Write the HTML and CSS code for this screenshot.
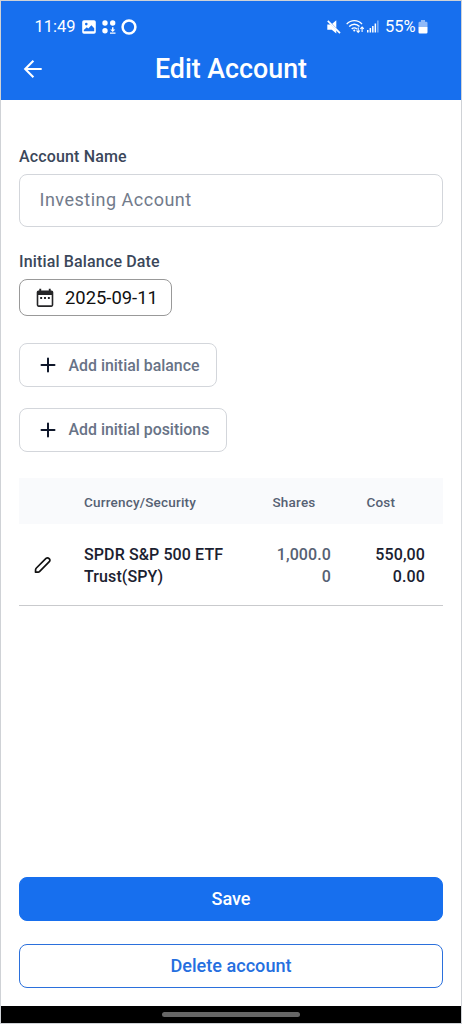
FILE: index.html
```html
<!DOCTYPE html>
<html lang="en">
<head>
<meta charset="utf-8">
<title>Edit Account</title>
<link rel="stylesheet" href="styles.css">
</head>
<body>
<div class="phone">
  <header class="header">
    <div class="status">
      <span class="status-time">11:49</span>
      <svg class="ic-photo" width="14" height="14" viewBox="0 0 14 14"><path fill="#fff" fill-rule="evenodd" d="M2 .3h10a1.8 1.8 0 0 1 1.8 1.8v9.8a1.8 1.8 0 0 1-1.8 1.8H2A1.8 1.8 0 0 1 .2 11.900V2.100A1.800 1.800 0 0 1 2 .3zM1.800 11.200h10.400V8.200L9.400 5.300 6.300 8.600 4.800 7.300 1.800 10zM4.300 2.800a1.300 1.300 0 1 0 0 2.600 1.300 1.300 0 0 0 0-2.600z"/></svg>
      <svg class="ic-dots" width="14" height="14" viewBox="0 0 14 14" fill="#fff"><circle cx="3" cy="3" r="2.700"/><circle cx="10.700" cy="3" r="2.700"/><circle cx="3" cy="10.800" r="2.700"/><path d="M10 7.200h1.500v2.300h1.800l-2.550 2.600-2.550-2.600H10zM8 12.500h5.500v1.300H8z"/></svg>
      <svg class="ic-ring" width="16" height="16" viewBox="0 0 16 16"><circle cx="8" cy="8" r="6.400" fill="none" stroke="#fff" stroke-width="2.500"/></svg>
      <span class="spacer"></span>
      <svg class="ic-mute" width="14" height="14" viewBox="0 0 14 14"><path fill="#fff" d="M.3 4.400h3.200l5.800 5.900v3.300L4.800 9.700H.3zM5.200 3.700 9.300.2v7.700z"/><path stroke="#fff" stroke-width="1.700" d="m.8.900 12.200 12.300"/></svg>
      <svg class="ic-wifi" width="19" height="15" viewBox="0 0 19 15" fill="none" stroke="#fff"><path stroke-width="1.400" d="M.7 5.100C5 .4 11.800.4 16 5.100M3.200 7.600c3-3.100 7.300-3.100 10.300 0M5.700 10.100c1.500-1.600 3.800-1.600 5.200 0"/><circle cx="8.300" cy="11.500" r="1.100" fill="#fff" stroke="none"/><path stroke-width="1.100" d="M12.200 8.500v4.800m-1.700-1.800 1.700 1.900 1.700-1.900M16.100 12.900V8m-1.700 1.900L16.100 8l1.700 1.900"/></svg>
      <svg class="ic-signal" width="12" height="13" viewBox="0 0 12 13" fill="#fff"><path d="M0 10h1.500v2.500H0zM2.600 8h1.500v4.500H2.600zM5.100 6h1.500v6.500H5.100zM7.600 3.600h1.500v8.900H7.600z"/><path opacity=".45" d="M10.100.5h1.500v12h-1.500z"/></svg>
      <span class="status-pct">55%</span>
      <svg class="ic-battery" width="10" height="14" viewBox="0 0 10 14"><path fill="#8fb9f8" d="M3 0h4v1.700h1.200A1.300 1.300 0 0 1 9.500 3v4h-9V3a1.300 1.300 0 0 1 1.300-1.300H3z"/><path fill="#fff" d="M.5 6.900h9v5.300a1.300 1.300 0 0 1-1.300 1.300H1.800a1.300 1.300 0 0 1-1.300-1.300z"/></svg>
    </div>
    <div class="appbar">
      <svg class="ic-back" width="20" height="20" viewBox="0 0 20 20" fill="none" stroke="#fff" stroke-width="2.100"><path d="M18.700 10H2M10.400 1.800 2.200 10l8.200 8.200"/></svg>
      <h1 class="title">Edit Account</h1>
    </div>
  </header>
  <main class="content">
    <label class="label">Account Name</label>
    <div class="field">Investing Account</div>
    <label class="label label-date">Initial Balance Date</label>
    <button class="date-btn">
      <svg width="18" height="20" viewBox="0 0 18 20"><path fill="#252527" fill-rule="evenodd" d="M3.300.8h1.900v1.700h7.600V.8h1.900v1.700h.8a1.800 1.800 0 0 1 1.800 1.800v12.800a1.800 1.800 0 0 1-1.800 1.800h-13a1.800 1.800 0 0 1-1.800-1.800V4.300a1.800 1.800 0 0 1 1.800-1.800h.8zM2.300 7.100v10.200h13.400V7.100z"/><path fill="#252527" d="M4.200 9.100h1.900V11H4.200zM8.050 9.100h1.900V11h-1.900zM11.900 9.100h1.900V11h-1.900z"/></svg>
      <span class="date-text">2025-09-11</span>
    </button>
    <button class="add-btn add-balance"><svg width="16" height="16" viewBox="0 0 16 16"><path fill="none" stroke="#0f172a" stroke-width="2" stroke-linecap="round" d="M8 1.500v13M1.500 8h13"/></svg><span class="add-text">Add initial balance</span></button>
    <button class="add-btn add-positions"><svg width="16" height="16" viewBox="0 0 16 16"><path fill="none" stroke="#0f172a" stroke-width="2" stroke-linecap="round" d="M8 1.500v13M1.500 8h13"/></svg><span class="add-text">Add initial positions</span></button>
    <div class="table">
      <div class="row head">
        <span></span><span class="th-name">Currency/Security</span><span class="th-shares">Shares</span><span class="th-cost">Cost</span>
      </div>
      <div class="row item">
        <svg class="ic-edit" width="18" height="18" viewBox="0 0 18 18"><path fill="none" stroke="#111" stroke-width="1.700" stroke-linejoin="round" d="M1.500 16.200l.1-2.500q.1-1 .8-1.700L12 2.400a2.350 2.350 0 0 1 3.300 3.300L5.700 15.300q-.7.700-1.700.8z"/></svg>
        <span class="name">SPDR S&amp;P 500 ETF<br>Trust(SPY)</span>
        <span class="shares">1,000.0<br>0</span>
        <span class="cost">550,00<br>0.00</span>
      </div>
    </div>
    <div class="actions">
      <button class="btn save"><span class="save-text">Save</span></button>
      <button class="btn delete"><span class="delete-text">Delete account</span></button>
    </div>
  </main>
  <footer class="navbar"><span class="pill"></span></footer>
</div>
</body>
</html>
```
FILE: styles.css
```css
* { box-sizing: border-box; }
body { margin: 0; font-family: Roboto, sans-serif; background: #fff; }
button { font-family: inherit; background: #fff; margin: 0; padding: 0; }
svg { display: block; flex: none; }
.phone { width: 462px; height: 1024px; border: 1px solid #cfd2d6; display: flex; flex-direction: column; background: #fff; }
.header { height: 99px; background: #176fee; color: #fff; flex: none; }
.status { display: flex; align-items: center; height: 37px; padding: 14px 33px 0 33.5px; font-size: 16.5px; line-height: 22px; }
.status-time { width: 41px; }
.ic-photo { margin-left: 6.5px; }
.ic-dots { margin-left: 6px; }
.ic-ring { margin-left: 5px; }
.spacer { flex: 1; }
.ic-wifi { margin-left: 4.5px; }
.ic-signal { margin-left: 2px; }
.status-pct { margin-left: 6.5px; width: 32px; white-space: nowrap; }
.ic-battery { margin-left: 1px; }
.appbar { display: grid; grid-template-columns: 60px 1fr 60px; align-items: center; height: 62px; }
.ic-back { margin-left: 22px; }
.title { margin: 0; font-size: 26.8px; font-weight: 500; line-height: 32px; text-align: center; }
.content { flex: 1; display: flex; flex-direction: column; align-items: flex-start; padding: 47px 18px 18px; }
.label { font-size: 16px; font-weight: 500; line-height: 20px; letter-spacing: .15px; color: #3b475a; }
.field { width: 100%; height: 53px; margin-top: 7px; padding-left: 19.5px; border: 1px solid #d3d6db; border-radius: 8px; font-size: 18px; line-height: 50px; letter-spacing: .5px; color: #727b8b; }
.label-date { margin-top: 25px; }
.date-btn { width: 153px; height: 37px; margin-top: 7px; padding-left: 16px; border: 1px solid #999; border-radius: 8px; display: flex; align-items: center; gap: 11px; font-size: 18.4px; color: #111; }
.add-btn { display: flex; align-items: center; height: 44px; padding-left: 20px; gap: 12.5px; border: 1px solid #d3d6db; border-radius: 8px; font-size: 15.9px; font-weight: 500; color: #687386; }
.add-balance { width: 198px; margin-top: 27px; }
.add-positions { width: 208px; margin-top: 20.5px; }
.table { width: 100%; margin-top: 26.5px; }
.row { display: grid; grid-template-columns: 65px 150px 97px 94px 18px; align-items: center; }
.head { height: 46px; padding-top: 2px; background: #f9fafc; color: #566173; font-size: 13.5px; font-weight: 500; letter-spacing: .2px; }
.th-shares { padding-left: 38.5px; }
.th-cost { padding-left: 35.5px; }
.item { height: 82px; padding-top: 2px; border-bottom: 1px solid #c9cacd; font-size: 16px; font-weight: 500; line-height: 22px; letter-spacing: .1px; color: #1b2130; }
.ic-edit { margin-left: 15px; margin-bottom: 1px; }
.shares { text-align: right; color: #566173; }
.cost { text-align: right; }
.actions { width: 100%; margin-top: auto; display: grid; gap: 23px; }
.btn { width: 100%; height: 44px; padding-bottom: 2px; border: 1px solid #2b70dc; border-radius: 8px; font-size: 18.1px; font-weight: 500; }
.save { background: #176fee; color: #fff; border-color: #176fee; }
.delete { color: #256fdf; }
.navbar { height: 17px; background: #000; display: flex; align-items: center; justify-content: center; flex: none; }
.pill { width: 138px; height: 5px; border-radius: 3px; background: #666; }
```
